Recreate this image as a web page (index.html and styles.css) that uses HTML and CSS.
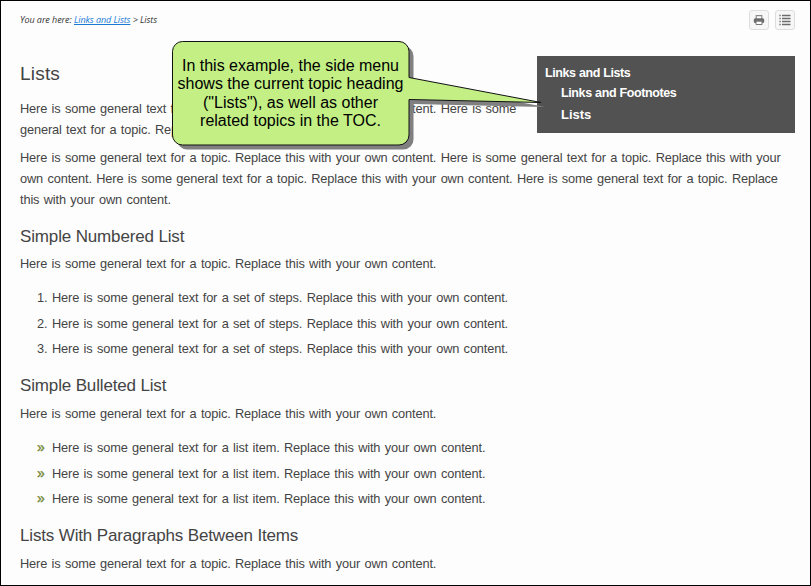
FILE: index.html
```
<!DOCTYPE html>
<html lang="en">
<head>
<meta charset="utf-8">
<title>Lists</title>
<link rel="stylesheet" href="styles.css">
</head>
<body>
<div class="page">
  <header class="topbar">
    <nav class="crumbs">You are here: <a href="#">Links and Lists</a> &gt; Lists</nav>
    <div class="tools">
      <button class="tool" aria-label="Print"><svg width="12" height="12" viewBox="0 0 12 12"><path d="M3.2 5V1.6h5.6V5" fill="#fff" stroke="#888" stroke-width="1.1"/><rect x=".8" y="4.3" width="10.4" height="4.7" rx="1.5" fill="#6c6c6c"/><path d="M3 7.2h6v3.3H3z" fill="#fff" stroke="#777"/></svg></button>
      <button class="tool" aria-label="Contents"><svg width="12" height="12" viewBox="0 0 12 12"><path d="M3 1.5h8.5M3 4.5h8.5M3 7.5h8.5M3 10.5h8.5M.4 1.5h1.3M.4 4.5h1.3M.4 7.5h1.3M.4 10.5h1.3" stroke="#6c6c6c" stroke-width="1.4"/></svg></button>
    </div>
  </header>
  <main class="topic">
    <aside class="menu">
      <a class="parent">Links and Lists</a>
      <a class="child">Links and Footnotes</a>
      <a class="child current">Lists</a>
    </aside>
    <h1>Lists</h1>
    <p>Here is some general text for a topic. Replace this with your own content. Here is some general text for a topic. Replace this with your own content.</p>
    <p>Here is some general text for a topic. Replace this with your own content. Here is some general text for a topic. Replace this with your own content. Here is some general text for a topic. Replace this with your own content. Here is some general text for a topic. Replace this with your own content.</p>
    <h2>Simple Numbered List</h2>
    <p>Here is some general text for a topic. Replace this with your own content.</p>
    <ol>
      <li><span class="mark">1.</span>Here is some general text for a set of steps. Replace this with your own content.</li>
      <li><span class="mark">2.</span>Here is some general text for a set of steps. Replace this with your own content.</li>
      <li><span class="mark">3.</span>Here is some general text for a set of steps. Replace this with your own content.</li>
    </ol>
    <h2>Simple Bulleted List</h2>
    <p>Here is some general text for a topic. Replace this with your own content.</p>
    <ul>
      <li><span class="mark">»</span>Here is some general text for a list item. Replace this with your own content.</li>
      <li><span class="mark">»</span>Here is some general text for a list item. Replace this with your own content.</li>
      <li><span class="mark">»</span>Here is some general text for a list item. Replace this with your own content.</li>
    </ul>
    <h2>Lists With Paragraphs Between Items</h2>
    <p>Here is some general text for a topic. Replace this with your own content.</p>
  </main>
  <div class="callout">
    <svg class="bubble" width="380" height="112" viewBox="0 0 380 112">
      <path transform="translate(4.5 4.5)" fill="#808080" d="M10.5 .5H227a10 10 0 0 1 10 10V36.5L369 61.5 237 58.5V94a10 10 0 0 1-10 10H10.5a10 10 0 0 1-10-10V10.5a10 10 0 0 1 10-10z"/>
      <path fill="#c3ef85" stroke="#111" d="M10.5 .5H227a10 10 0 0 1 10 10V36.5L369 61.5 237 58.5V94a10 10 0 0 1-10 10H10.5a10 10 0 0 1-10-10V10.5a10 10 0 0 1 10-10z"/>
    </svg>
    <div class="note"><span>In this example, the side menu</span><span>shows the current topic heading</span><span>("Lists"), as well as other</span><span>related topics in the TOC.</span></div>
  </div>
</div>
</body>
</html>
```
FILE: styles.css
```
* { box-sizing: border-box; }
body { margin: 0; background: #fdfdfd; color: #444; font-family: "Liberation Sans", Arial, sans-serif; font-size: 12.8px; }
.page { position: relative; height: 586px; overflow: hidden; border: 1px solid #000; padding: 9px 15px 0 19px; }
.topbar { display: flex; justify-content: space-between; height: 46px; }
.crumbs { font: italic 9px/20px "Open Sans", sans-serif; letter-spacing: -.07px; color: #333; }
.crumbs a { color: #1a7bd7; }
.tools { display: flex; gap: 6px; }
.tool { width: 20px; height: 20px; padding: 0; border: 1px solid #ddd; border-radius: 3px; background: #f7f7f7; display: flex; align-items: center; justify-content: center; }
.menu { float: right; width: 258px; height: 77px; margin-left: 16px; padding: 7px 8px; background: #525252; color: #fff; font-weight: bold; }
.menu a { display: block; font-size: 12.5px; letter-spacing: -.42px; word-spacing: .3px; line-height: 20px; white-space: nowrap; }
.menu .child { padding-left: 16px; letter-spacing: -.39px; }
.menu .current { margin-top: 2px; font-size: 13px; letter-spacing: 0; }
h1, h2 { margin: 0; font-weight: normal; }
h1 { font-size: 19px; line-height: 24px; letter-spacing: .2px; padding: 6px 0 12px; }
h2 { font-size: 17px; line-height: 21px; letter-spacing: -.15px; margin: 16px 0 6px; }
ol + h2, ul + h2 { margin: 13.5px 0 7px; }
p { margin: 0 0 7px; line-height: 21px; letter-spacing: -.145px; word-spacing: 1px; }
ol, ul { list-style: none; margin: 11px 0 0; padding: 0; }
li { display: flex; line-height: 25.5px; letter-spacing: -.14px; word-spacing: 1px; }
.mark { width: 32px; padding-left: 17px; flex: none; }
ul .mark { color: #71852f; font-size: 14px; -webkit-text-stroke: .3px #71852f; }
.callout { position: absolute; left: 171px; top: 40px; width: 380px; height: 112px; }
.bubble { position: absolute; left: 0; top: 0; }
.note { position: absolute; left: 0; top: 16px; width: 237px; text-align: center; color: #000; font-size: 16px; line-height: 18.4px; }
.note span { display: block; white-space: nowrap; }
```
